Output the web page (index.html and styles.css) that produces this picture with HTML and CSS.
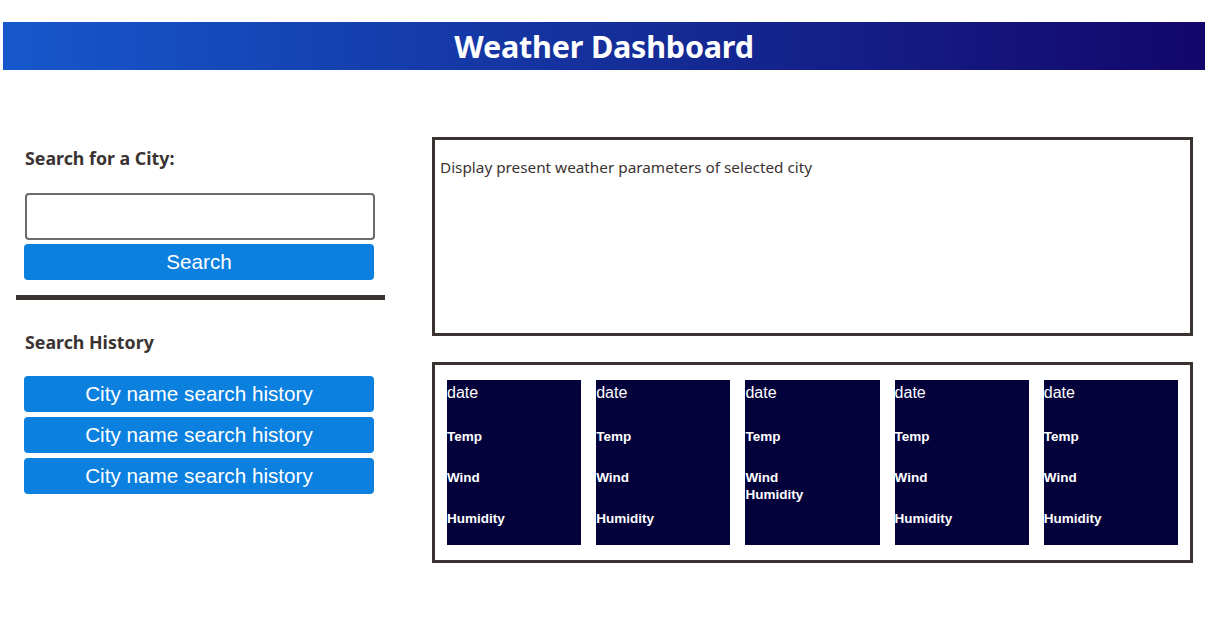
FILE: index.html
```html
<!DOCTYPE html>
<html lang="en">
<head>
<meta charset="utf-8">
<title>Weather Dashboard</title>
<link rel="stylesheet" href="styles.css">
</head>
<body>
<header class="top">
  <h1 class="title">Weather Dashboard</h1>
</header>
<main class="layout">
  <aside class="side">
    <h2 class="label">Search for a City:</h2>
    <input class="city-input" type="text">
    <button class="btn search-btn">Search</button>
    <hr class="divider">
    <h2 class="label history-label">Search History</h2>
    <div class="history">
      <button class="btn">City name search history</button>
      <button class="btn">City name search history</button>
      <button class="btn">City name search history</button>
    </div>
  </aside>
  <section class="content">
    <div class="current">
      <p class="current-text">Display present weather parameters of selected city</p>
    </div>
    <div class="forecast">
      <div class="card">
        <div class="date">date</div>
        <p class="param">Temp</p>
        <p class="param">Wind</p>
        <p class="param">Humidity</p>
      </div>
      <div class="card">
        <div class="date">date</div>
        <p class="param">Temp</p>
        <p class="param">Wind</p>
        <p class="param">Humidity</p>
      </div>
      <div class="card">
        <div class="date">date</div>
        <p class="param">Temp</p>
        <p class="param">Wind</p>
        <p class="param tight">Humidity</p>
      </div>
      <div class="card">
        <div class="date">date</div>
        <p class="param">Temp</p>
        <p class="param">Wind</p>
        <p class="param">Humidity</p>
      </div>
      <div class="card">
        <div class="date">date</div>
        <p class="param">Temp</p>
        <p class="param">Wind</p>
        <p class="param">Humidity</p>
      </div>
    </div>
  </section>
</main>
</body>
</html>
```
FILE: styles.css
```css
* { box-sizing: border-box; }
body {
  margin: 0;
  font-family: "Noto Sans", "Open Sans", sans-serif;
  color: #3a3332;
  background: #fff;
}
.top {
  margin: 22px 2px 0 3px;
  height: 48px;
  background: linear-gradient(to right, #1658cc, #13066a);
  display: flex;
  align-items: center;
  justify-content: center;
}
.title {
  margin: 0;
  color: #fff;
  font-size: 30.5px;
  font-weight: 700;
  line-height: 48px;
  letter-spacing: -0.2px;
}
.layout {
  display: flex;
  margin-top: 67px;
}
.side {
  margin-left: 16px;
  width: 369px;
  padding-top: 10px;
  display: flex;
  flex-direction: column;
}
.label {
  margin: 0 0 0 9px;
  font-size: 17.8px;
  font-weight: 700;
  line-height: 22px;
  color: #3a3332;
}
.city-input {
  margin: 24px 0 0 9px;
  width: 350px;
  height: 47px;
  border: 2px solid #6f6a6a;
  border-radius: 4px;
  background: #fff;
}
.btn {
  display: block;
  width: 350px;
  height: 36px;
  margin-left: 8px;
  border: none;
  border-radius: 4px;
  background: #0b80df;
  color: #fff;
  font-family: "Liberation Sans", Arial, sans-serif;
  font-size: 20.7px;
  padding: 0;
}
.search-btn { margin-top: 4px; }
.divider {
  margin: 15px 0 0 0;
  height: 5px;
  border: none;
  background: #3a3332;
  width: 369px;
}
.history-label { margin-top: 31px; }
.history {
  margin-top: 23px;
  display: flex;
  flex-direction: column;
  gap: 5px;
}
.content {
  margin-left: 47px;
  width: 761px;
  display: flex;
  flex-direction: column;
  gap: 26px;
}
.current {
  height: 199px;
  border: 3px solid #3a3332;
  padding: 17px 5px;
}
.current-text {
  margin: 0;
  font-size: 15.3px;
  line-height: 20px;
  color: #3a3332;
}
.forecast {
  height: 201px;
  border: 3px solid #3a3332;
  padding: 15px 12px;
  display: flex;
  gap: 15px;
}
.card {
  flex: 1;
  background: #03023b;
  color: #fff;
  display: flex;
  flex-direction: column;
}
.date {
  font-family: "Liberation Sans", Arial, sans-serif;
  font-size: 16px;
  line-height: 22px;
  padding-top: 2px;
}
.param {
  margin: 24px 0 0 0;
  font-family: "Liberation Sans", Arial, sans-serif;
  font-weight: 700;
  font-size: 13.5px;
  line-height: 17px;
}
.param:first-of-type { margin-top: 24px; }
.param.tight { margin-top: 0; }
```
